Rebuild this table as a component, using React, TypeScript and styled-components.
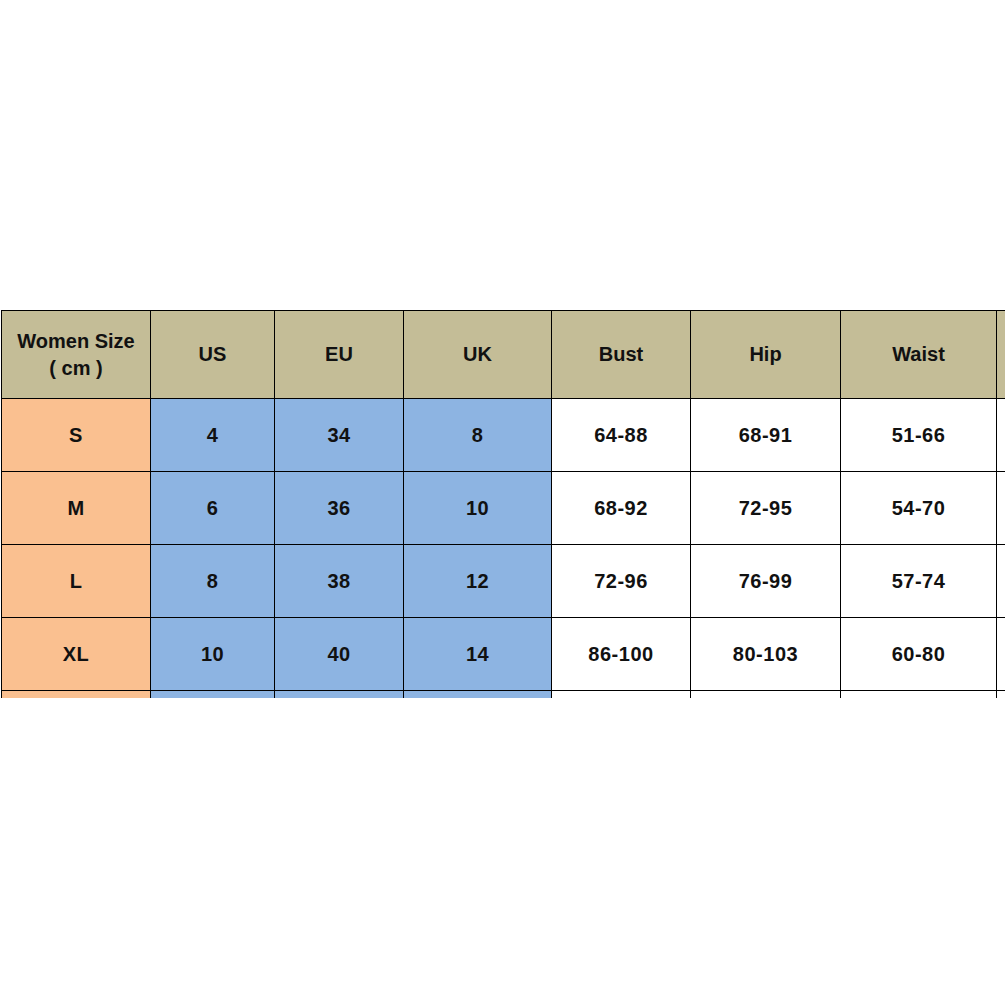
import styled, { createGlobalStyle } from "styled-components";

const GlobalStyle = createGlobalStyle`
  html, body {
    margin: 0;
    padding: 0;
    background: #ffffff;
  }
  body {
    font-family: "Liberation Sans", Arial, sans-serif;
  }
`;

// 열 너비 (오른쪽 선 포함)
const columnWidths = [149, 124, 129, 148, 139, 150, 156, 150];
const headers = ["Women Size\n( cm )", "US", "EU", "UK", "Bust", "Hip", "Waist", ""];

const rows = [
  ["S", "4", "34", "8", "64-88", "68-91", "51-66", ""],
  ["M", "6", "36", "10", "68-92", "72-95", "54-70", ""],
  ["L", "8", "38", "12", "72-96", "76-99", "57-74", ""],
  ["XL", "10", "40", "14", "86-100", "80-103", "60-80", ""],
  ["", "", "", "", "", "", "", ""]
];

type Tone = "head" | "size" | "region" | "plain";

const toneColors: Record<Tone, string> = {
  head: "#c4bd97",
  size: "#fac090",
  region: "#8db4e2",
  plain: "#ffffff"
};

const toneFor = (col: number): Tone => {
  if (col === 0) return "size";
  if (col <= 3) return "region";
  return "plain";
};

const App: React.FC = () => {
  return (
    <>
      <GlobalStyle />
      <Page>
        <ChartFrame>
          <SizeGrid style={{ gridTemplateColumns: columnWidths.map(w => `${w}px`).join(" ") }}>
            {headers.map((label, i) => (
              <HeadCell key={`h-${i}`} tone="head">
                {label}
              </HeadCell>
            ))}
            {rows.map((row, r) =>
              row.map((value, c) => (
                <BodyCell key={`${r}-${c}`} tone={toneFor(c)}>
                  {value}
                </BodyCell>
              ))
            )}
          </SizeGrid>
        </ChartFrame>
      </Page>
    </>
  );
};

const Page = styled.div`
  width: 1005px;
  height: 1005px;
  padding-top: 310px;
  box-sizing: border-box;
  overflow: hidden;
`;

const ChartFrame = styled.div`
  width: 1005px;
  height: 388px;
  overflow: hidden;
`;

const SizeGrid = styled.div`
  display: grid;
  grid-template-rows: 88px repeat(5, 73px);
  margin-left: 1px;
  width: max-content;
  border-top: 1px solid #000;
  border-left: 1px solid #000;
`;

const Cell = styled.div<{ tone: Tone }>`
  box-sizing: border-box;
  display: flex;
  align-items: center;
  justify-content: center;
  text-align: center;
  background-color: ${props => toneColors[props.tone]};
  border-right: 1px solid #000;
  border-bottom: 1px solid #000;
  color: #111;
  font-family: "Liberation Sans", Arial, sans-serif;
  font-weight: bold;
  font-size: 20px;
`;

const HeadCell = styled(Cell)`
  white-space: pre-line;
  line-height: 27px;
`;

const BodyCell = styled(Cell)`
  line-height: 1;
  letter-spacing: 0.5px;
`;

export default App;
